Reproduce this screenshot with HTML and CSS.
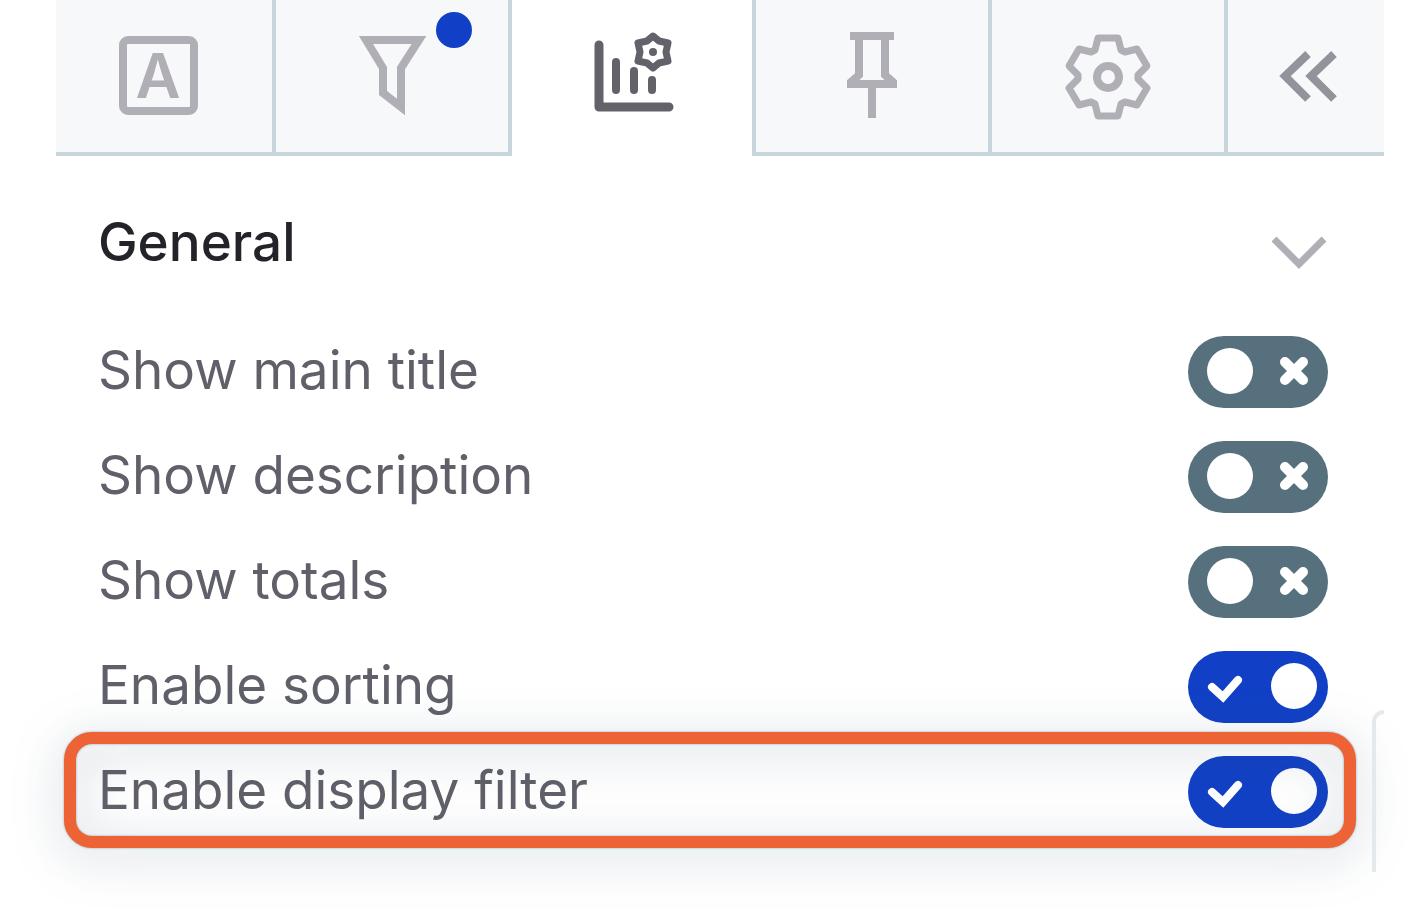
FILE: index.html
```html
<!DOCTYPE html>
<html lang="en">
<head>
    <meta charset="UTF-8">
    <meta name="viewport" content="width=device-width, initial-scale=1.0">
    <title>Chart settings</title>
    <link rel="stylesheet" href="styles.css">
</head>
<body>

<!-- Toggle icons -->
<svg class="sprite" aria-hidden="true">
    <symbol id="toggle-off" viewBox="0 0 140 72">
        <circle cx="42" cy="35" r="23" fill="#fff"/>
        <path d="M97 26l18 18M115 26L97 44" fill="none" stroke="#fff" stroke-width="10" stroke-linecap="round"/>
    </symbol>
    <symbol id="toggle-on" viewBox="0 0 140 72">
        <path d="M24 36l11 10L50 29" fill="none" stroke="#fff" stroke-width="8" stroke-linecap="round"/>
        <circle cx="106" cy="35" r="23" fill="#fff"/>
    </symbol>
</svg>

<main class="panel">
    <nav class="tabs">
        <button class="tab tab-text" type="button" aria-label="Text">
            <svg class="icon" viewBox="0 0 96 96">
                <rect x="13" y="12" width="71" height="71" rx="5"/>
                <text x="48" y="70" text-anchor="middle">A</text>
            </svg>
        </button>
        <button class="tab" type="button" aria-label="Filters">
            <svg class="icon" viewBox="0 0 96 96">
                <path d="M22 12H75L57 40V79L39 65V40Z"/>
            </svg>
            <span class="dot"></span>
        </button>
        <button class="tab active" type="button" aria-label="Chart settings">
            <svg class="icon" viewBox="0 0 96 96">
                <path class="axis" d="M15 17V79H85"/>
                <path d="M32 34V62M50 43V62M68 52V62"/>
                <path class="thin" d="M69 8L75 13 84 15 82 24 84 33 75 35 69 40 63 35 54 33 56 24 54 15 63 13Z"/>
                <circle class="fill" cx="69" cy="24" r="4"/>
            </svg>
        </button>
        <button class="tab tab-pin" type="button" aria-label="Pin">
            <svg class="icon" viewBox="0 0 96 96">
                <path d="M26 8H70M35 8V47L27 54V56H69V54L61 47V8M48 58V90"/>
            </svg>
        </button>
        <button class="tab" type="button" aria-label="Settings">
            <svg class="icon" viewBox="0 0 96 96">
                <path class="thin" transform="translate(48 49)" d="M-10-39H10L13-27 17-25 29-28 39-11 30-2V2L39 11 29 28 17 25 13 27 10 39H-10L-13 27-17 25-29 28-39 11-30 2V-2L-39-11-29-28-17-25-13-27Z"/>
                <circle cx="48" cy="49" r="11"/>
            </svg>
        </button>
        <button class="tab tab-collapse" type="button" aria-label="Collapse">
            <svg class="icon" viewBox="0 0 96 96">
                <path d="M50 26L27 48 50 71M76 26L53 48 76 71"/>
            </svg>
        </button>
    </nav>

    <section class="section">
        <header class="section-header">
            <h2>General</h2>
            <button class="chevron" type="button" aria-label="Collapse General">
                <svg viewBox="0 0 56 40"><path d="M2 5L27 30 52 5"/></svg>
            </button>
        </header>

        <div class="row">
            <label for="mainTitle">Show main title</label>
            <span class="toggle">
                <input type="checkbox" id="mainTitle">
                <svg class="off"><use href="#toggle-off"/></svg>
                <svg class="on"><use href="#toggle-on"/></svg>
            </span>
        </div>
        <div class="row">
            <label for="description">Show description</label>
            <span class="toggle">
                <input type="checkbox" id="description">
                <svg class="off"><use href="#toggle-off"/></svg>
                <svg class="on"><use href="#toggle-on"/></svg>
            </span>
        </div>
        <div class="row">
            <label for="totals">Show totals</label>
            <span class="toggle">
                <input type="checkbox" id="totals">
                <svg class="off"><use href="#toggle-off"/></svg>
                <svg class="on"><use href="#toggle-on"/></svg>
            </span>
        </div>
        <div class="row">
            <label for="sorting">Enable sorting</label>
            <span class="toggle">
                <input type="checkbox" id="sorting" checked>
                <svg class="off"><use href="#toggle-off"/></svg>
                <svg class="on"><use href="#toggle-on"/></svg>
            </span>
        </div>
        <div class="row highlighted">
            <label for="displayFilter">Enable display filter</label>
            <span class="toggle">
                <input type="checkbox" id="displayFilter" checked>
                <svg class="off"><use href="#toggle-off"/></svg>
                <svg class="on"><use href="#toggle-on"/></svg>
            </span>
        </div>
    </section>

    <div class="card-edge"></div>
</main>

</body>
</html>
```

FILE: styles.css
```css
* {
    margin: 0;
    padding: 0;
    box-sizing: border-box;
}

body {
    min-height: 100vh;
    font-family: Inter, "Liberation Sans", sans-serif;
    font-size: 53px;
    line-height: 64px;
    background-color: #fff;
    color: #5f6069;
}

button {
    border: none;
    background: none;
    font: inherit;
    cursor: pointer;
}

.sprite {
    display: none;
}

.panel {
    position: relative;
    margin: 0 36px 0 56px;
}

/* Tabs */
.tabs {
    display: grid;
    grid-template-columns: 220fr 236fr 240fr 240fr 236fr 156fr;
}

.tab {
    position: relative;
    display: flex;
    align-items: center;
    justify-content: center;
    height: 156px;
    background-color: #f6f8fa;
    border-right: 4px solid #c9d5dc;
    border-bottom: 4px solid #c9d5dc;
    color: #b0afb5;
}

.tab-text {
    padding-right: 12px;
}

.tab.active {
    background-color: #fff;
    border-color: transparent;
    border-right: none;
    color: #62626b;
}

.tab-pin {
    border-left: 4px solid #c9d5dc;
}

.tab-collapse {
    border-right: none;
    color: #93939b;
}

.icon {
    flex: none;
    width: 96px;
    height: 96px;
    fill: none;
    stroke: currentColor;
    stroke-width: 8px;
}

.icon text {
    fill: currentColor;
    stroke: none;
    font-size: 62px;
    font-weight: 600;
}

.icon .thin {
    stroke-width: 7px;
    stroke-linejoin: round;
}

.icon .axis {
    stroke-width: 9px;
}

.icon .fill {
    fill: currentColor;
    stroke: none;
}

.active .icon {
    stroke-linecap: round;
    stroke-linejoin: round;
}

/* Blue dot on the filter tab */
.dot {
    position: absolute;
    top: 12px;
    right: 36px;
    width: 36px;
    height: 36px;
    border-radius: 50%;
    background-color: #1140c6;
}

/* Section */
.section {
    padding: 54px 56px 28px 42px;
}

.section-header {
    display: flex;
    justify-content: space-between;
    align-items: flex-end;
    margin-bottom: 45px;
}

.section-header h2 {
    font-size: 53px;
    font-weight: 500;
    color: #232429;
}

.chevron svg {
    display: block;
    width: 56px;
    height: 40px;
    fill: none;
    stroke: #b0afb5;
    stroke-width: 7px;
}

.row {
    position: relative;
    display: flex;
    justify-content: space-between;
    align-items: center;
    height: 105px;
}

.row label {
    padding-bottom: 4px;
}

/* Toggle */
.toggle {
    display: grid;
    width: 140px;
    height: 72px;
}

.toggle input,
.toggle svg {
    grid-area: 1 / 1;
    width: 140px;
    height: 72px;
}

.toggle input {
    appearance: none;
    border-radius: 36px;
    background-color: #56717d;
    cursor: pointer;
}

.toggle input:checked {
    background-color: #1140c6;
}

.toggle svg {
    pointer-events: none;
}

.toggle .on,
.toggle input:checked ~ .off {
    display: none;
}

.toggle input:checked ~ .on {
    display: block;
}

/* Orange frame around the row */
.highlighted::after {
    content: "";
    position: absolute;
    inset: -7px -28px -4px -34px;
    border: 12px solid #ed6335;
    border-radius: 28px;
    filter: drop-shadow(0 0 1px rgba(60, 100, 120, 0.5)) drop-shadow(0 8px 24px rgba(50, 80, 100, 0.34));
    pointer-events: none;
}

/* Edge of the next card */
.card-edge {
    position: absolute;
    right: 0;
    bottom: 0;
    width: 12px;
    height: 162px;
    border-left: 4px solid #e3e9ec;
    border-top: 4px solid #e3e9ec;
    border-top-left-radius: 12px;
}
```
